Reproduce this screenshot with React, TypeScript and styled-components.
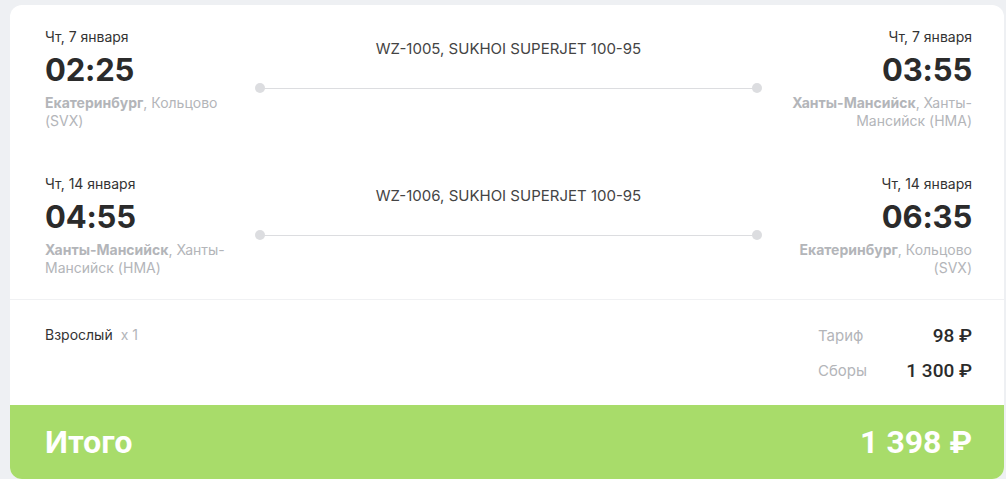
import styled, { createGlobalStyle } from "styled-components";

const GlobalStyle = createGlobalStyle`
  html, body {
    margin: 0;
    padding: 0;
    background: #eef0f3;
    font-family: Inter, "Noto Sans", sans-serif;
    color: #333333;
  }
`;

const Page = styled.div`
  padding: 5px 2px 0 10px;
  height: 479px;
  box-sizing: border-box;
  overflow: hidden;
`;

const Card = styled.div`
  width: 994px;
  height: 474px;
  background: #ffffff;
  border-radius: 12px;
  overflow: hidden;
  display: flex;
  flex-direction: column;
`;

const Segments = styled.div`
  padding: 23px 32px 22px 35px;
  display: flex;
  flex-direction: column;
  gap: 45px;
  border-bottom: 1px solid #f0f1f3;
`;

const Segment = styled.div`
  display: grid;
  grid-template-columns: 210px 1fr 210px;
`;

const Point = styled.div<{ $right?: boolean }>`
  display: flex;
  flex-direction: column;
  text-align: ${(p) => (p.$right ? "right" : "left")};
`;

const DateText = styled.div`
  font-size: 14px;
  line-height: 18px;
  color: #333333;
`;

const Time = styled.div`
  font-size: 31px;
  line-height: 40px;
  font-weight: 700;
  color: #2b2b2b;
  margin-top: 4px;
  letter-spacing: -0.2px;
`;

const Place = styled.div`
  font-size: 14px;
  line-height: 18px;
  color: #b3b5b9;
  margin-top: 4px;

  b {
    font-weight: 700;
  }
`;

const Middle = styled.div`
  display: flex;
  flex-direction: column;
  padding-top: 12px;
`;

const Flight = styled.div`
  font-size: 15px;
  line-height: 18px;
  text-align: center;
  color: #444444;
  text-transform: uppercase;
`;

const Track = styled.div`
  position: relative;
  height: 10px;
  margin-top: 25px;
  display: flex;
  align-items: center;
  justify-content: space-between;

  &::before {
    content: "";
    position: absolute;
    left: 5px;
    right: 5px;
    top: 5px;
    height: 1px;
    background: #dcdde0;
  }
`;

const Dot = styled.span`
  width: 10px;
  height: 10px;
  border-radius: 50%;
  background: #dcdde0;
  position: relative;
`;

const Pricing = styled.div`
  flex: 1;
  display: flex;
  justify-content: space-between;
  padding: 26px 32px 0 35px;
`;

const Passenger = styled.div`
  font-size: 14px;
  line-height: 18px;
  color: #333333;

  span {
    color: #b3b5b9;
    margin-left: 8px;
  }
`;

const PriceTable = styled.div`
  display: grid;
  grid-template-columns: 87px 67px;
  grid-auto-rows: 35px;
  margin-top: -8px;
`;

const PriceLabel = styled.div`
  font-size: 15px;
  line-height: 35px;
  color: #b3b5b9;
`;

const PriceValue = styled.div`
  font-family: Roboto, "Noto Sans", sans-serif;
  font-size: 19px;
  font-weight: 500;
  line-height: 35px;
  text-align: right;
  color: #2b2b2b;
  white-space: nowrap;
`;

const Total = styled.div`
  height: 74px;
  background: #a8dc6a;
  display: flex;
  align-items: center;
  justify-content: space-between;
  padding: 0 32px 0 35px;
  color: #ffffff;
`;

const TotalLabel = styled.div`
  font-size: 30px;
  font-weight: 700;
`;

const TotalValue = styled.div`
  font-family: Roboto, "Noto Sans", sans-serif;
  font-size: 32px;
  font-weight: 700;
  white-space: nowrap;
`;

type Leg = {
  date: string;
  time: string;
  city: string;
  airport: string;
};

type FlightSegment = {
  code: string;
  from: Leg;
  to: Leg;
};

const segments: FlightSegment[] = [
  {
    code: "WZ-1005, Sukhoi Superjet 100-95",
    from: {
      date: "Чт, 7 января",
      time: "02:25",
      city: "Екатеринбург",
      airport: "Кольцово (SVX)",
    },
    to: {
      date: "Чт, 7 января",
      time: "03:55",
      city: "Ханты-Мансийск",
      airport: "Ханты-Мансийск (HMA)",
    },
  },
  {
    code: "WZ-1006, Sukhoi Superjet 100-95",
    from: {
      date: "Чт, 14 января",
      time: "04:55",
      city: "Ханты-Мансийск",
      airport: "Ханты-Мансийск (HMA)",
    },
    to: {
      date: "Чт, 14 января",
      time: "06:35",
      city: "Екатеринбург",
      airport: "Кольцово (SVX)",
    },
  },
];

function LegPoint({ leg, right }: { leg: Leg; right?: boolean }) {
  return (
    <Point $right={right}>
      <DateText>{leg.date}</DateText>
      <Time>{leg.time}</Time>
      <Place>
        <b>{leg.city}</b>, {leg.airport}
      </Place>
    </Point>
  );
}

export default function App() {
  return (
    <>
      <GlobalStyle />
      <Page>
        <Card>
          <Segments>
            {segments.map((s) => (
              <Segment key={s.code}>
                <LegPoint leg={s.from} />
                <Middle>
                  <Flight>{s.code}</Flight>
                  <Track>
                    <Dot />
                    <Dot />
                  </Track>
                </Middle>
                <LegPoint leg={s.to} right />
              </Segment>
            ))}
          </Segments>
          <Pricing>
            <Passenger>
              Взрослый<span>x 1</span>
            </Passenger>
            <PriceTable>
              <PriceLabel>Тариф</PriceLabel>
              <PriceValue>98 ₽</PriceValue>
              <PriceLabel>Сборы</PriceLabel>
              <PriceValue>1 300 ₽</PriceValue>
            </PriceTable>
          </Pricing>
          <Total>
            <TotalLabel>Итого</TotalLabel>
            <TotalValue>1 398 ₽</TotalValue>
          </Total>
        </Card>
      </Page>
    </>
  );
}
